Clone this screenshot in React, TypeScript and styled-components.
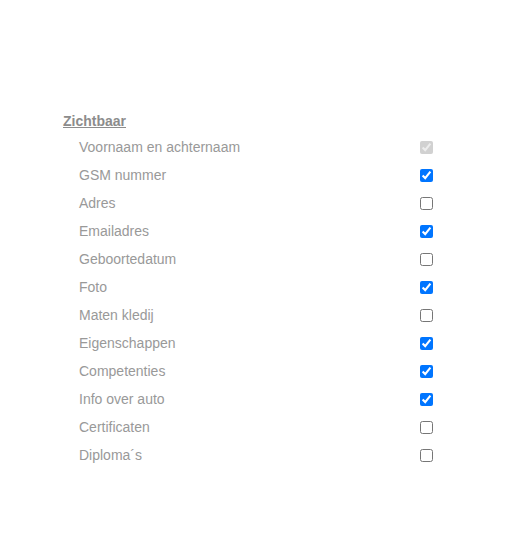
import React from "react"
import styled, { createGlobalStyle } from "styled-components"

const GlobalStyle = createGlobalStyle`
  body {
    margin: 0;
    background: #ffffff;
    font-family: "Liberation Sans", Arial, sans-serif;
  }
`

type Field = { label: string; checked: boolean; disabled?: boolean }

const fields: Field[] = [
  { label: "Voornaam en achternaam", checked: true, disabled: true },
  { label: "GSM nummer", checked: true },
  { label: "Adres", checked: false },
  { label: "Emailadres", checked: true },
  { label: "Geboortedatum", checked: false },
  { label: "Foto", checked: true },
  { label: "Maten kledij", checked: false },
  { label: "Eigenschappen", checked: true },
  { label: "Competenties", checked: true },
  { label: "Info over auto", checked: true },
  { label: "Certificaten", checked: false },
  { label: "Diploma´s", checked: false },
]

export default function App() {
  return (
    <>
      <GlobalStyle />
      <Page>
        <Heading>Zichtbaar</Heading>
        <List>
          {fields.map((f) => (
            <Row key={f.label}>
              <Label>{f.label}</Label>
              <Check type="checkbox" defaultChecked={f.checked} disabled={f.disabled} />
            </Row>
          ))}
        </List>
      </Page>
    </>
  )
}

const Page = styled.div`
  display: flex;
  flex-direction: column;
  padding: 113px 0 0 63px;
`

const Heading = styled.div`
  font-size: 14px;
  font-weight: bold;
  color: #8c8c8c;
  text-decoration: underline;
  line-height: 16px;
`

const List = styled.div`
  display: flex;
  flex-direction: column;
  padding-left: 16px;
  margin-top: 4px;
`

const Row = styled.label`
  display: flex;
  align-items: center;
  height: 28px;
`

const Label = styled.span`
  width: 341px;
  font-size: 14px;
  color: #999999;
`

const Check = styled.input`
  width: 13px;
  height: 13px;
  margin: 0;
`
